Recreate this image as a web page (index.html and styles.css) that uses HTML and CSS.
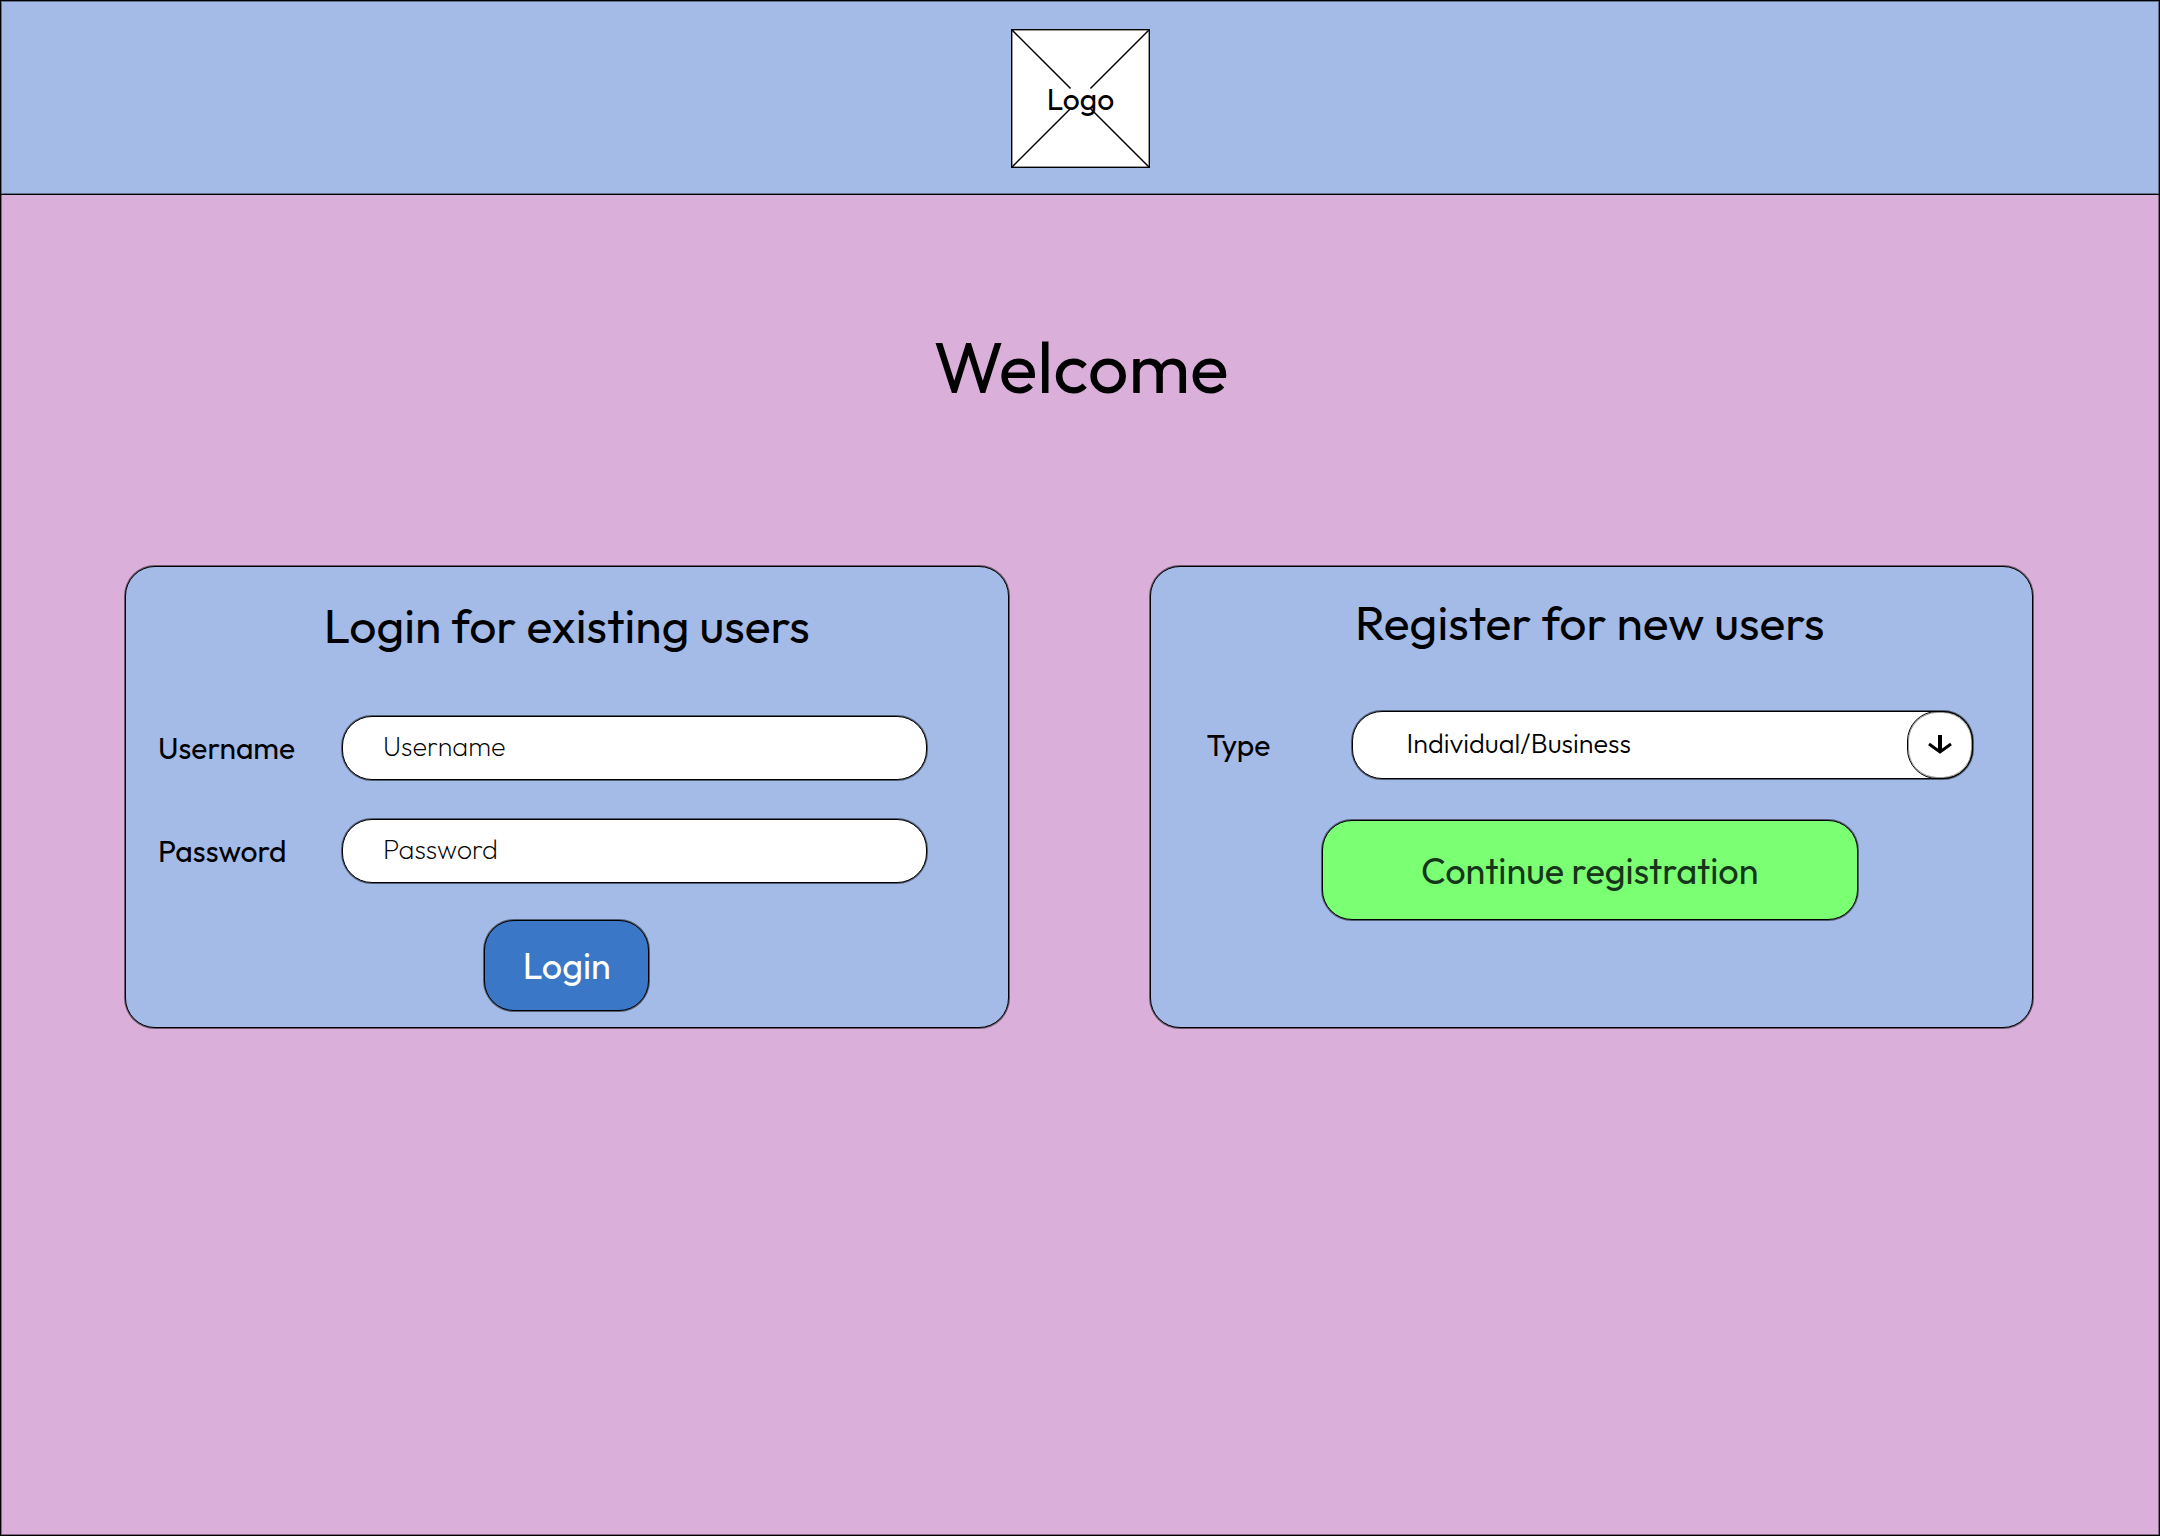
FILE: index.html
```html
<!DOCTYPE html>
<html lang="en">
<head>
<meta charset="utf-8">
<meta name="viewport" content="width=device-width, initial-scale=1">
<title>Welcome</title>
<link rel="stylesheet" href="styles.css">
</head>
<body>
<div class="page">
  <header class="header">
    <div class="logo">
      <svg class="logo-cross" viewBox="0 0 138 138" aria-hidden="true">
        <path d="M0 0L59 59M138 0L79 59M0 138L59 79M138 138L79 79"/>
      </svg>
      <span class="logo-text">Logo</span>
    </div>
  </header>
  <main class="main">
    <h1 class="title">Welcome</h1>
    <div class="cards">
      <section class="card card-login">
        <h2 class="card-title">Login for existing users</h2>
        <form class="form">
          <div class="row">
            <label class="label" for="username">Username</label>
            <input class="field" id="username" type="text" placeholder="Username">
          </div>
          <div class="row">
            <label class="label" for="password">Password</label>
            <input class="field" id="password" type="password" placeholder="Password">
          </div>
          <button class="button button-login" type="button">Login</button>
        </form>
      </section>
      <section class="card card-register">
        <h2 class="card-title">Register for new users</h2>
        <form class="form">
          <div class="row">
            <label class="label" for="type">Type</label>
            <div class="select-wrap">
              <select class="field select" id="type">
                <option>Individual/Business</option>
              </select>
              <span class="knob" aria-hidden="true">
                <svg class="arrow" viewBox="0 0 24 20">
                  <path class="shaft" d="M12 0V17"/>
                  <path class="head" d="M1 9L12 17L23 9"/>
                </svg>
              </span>
            </div>
          </div>
          <button class="button button-register" type="button">Continue registration</button>
        </form>
      </section>
    </div>
  </main>
</div>
</body>
</html>
```
FILE: styles.css
```css
:root {
  --blue: #a4bbe8;
  --pink: #dab0da;
  --edge: 0 0 0 1px rgba(0, 0, 0, 0.5);
}

* {
  box-sizing: border-box;
}

body {
  margin: 0;
  font-family: "Outfit", "Lato", sans-serif;
  color: #000;
}

.page {
  min-height: 100vh;
  border: 1px solid #000;
  background: var(--pink);
  box-shadow: inset 0 0 0 1px rgba(0, 0, 0, 0.4);
}

.header {
  display: flex;
  justify-content: center;
  padding: 28px 0 26px 1px;
  background: var(--blue);
  border-bottom: 1px solid #000;
  box-shadow: inset 0 0 0 1px rgba(0, 0, 0, 0.4);
}

.logo {
  display: grid;
  place-items: center;
  width: 139px;
  height: 139px;
  background: #fff;
  border: 1px solid #000;
  box-shadow: inset 0 0 0 1px rgba(0, 0, 0, 0.4);
}

.logo-cross,
.logo-text {
  grid-area: 1 / 1;
}

.logo-cross {
  width: 137px;
  height: 137px;
  fill: none;
  stroke: #000;
  stroke-width: 1.5;
}

.logo-text {
  font-size: 30px;
  line-height: 36px;
}

.title {
  margin: 0;
  padding: 127px 0 154px 2px;
  font-size: 72px;
  line-height: 90px;
  font-weight: 400;
  text-align: center;
}

.cards {
  display: grid;
  grid-template-columns: 1fr 1fr;
  gap: 141px;
  padding: 0 126px 48px 124px;
}

.card {
  min-height: 462px;
  background: var(--blue);
  border: 1px solid #000;
  border-radius: 30px;
  box-shadow: var(--edge);
}

.card-login {
  padding: 28px 81px 16px 32px;
}

.card-register {
  padding: 25px 59px 16px 56px;
}

.card-title {
  margin: 0;
  font-size: 48px;
  line-height: 60px;
  font-weight: 400;
  text-align: center;
}

.card-login .card-title {
  margin-right: -49px;
}

.form {
  display: flex;
  flex-direction: column;
}

.row {
  display: flex;
  align-items: center;
}

.card-login .row {
  margin-top: 39px;
}

.card-login .row:first-child {
  margin-top: 61px;
}

.card-register .row {
  margin-top: 59px;
}

.label {
  flex: none;
  font-size: 30px;
  line-height: 38px;
}

.card-login .label {
  width: 184px;
}

.card-register .label {
  width: 145px;
}

.field {
  flex: 1;
  min-width: 0;
  height: 64px;
  padding: 0 40px 4px;
  font: 200 27px/34px "Outfit", "Lato", sans-serif;
  color: #000;
  background: #fff;
  border: 1px solid #000;
  border-radius: 30px;
  box-shadow: var(--edge);
}

.field::placeholder {
  color: #000;
  opacity: 1;
}

.select-wrap {
  position: relative;
  display: flex;
  flex: 1;
}

.select {
  height: 68px;
  padding: 0 80px 4px 54px;
  font-weight: 300;
  appearance: none;
}

.knob {
  position: absolute;
  top: 0;
  right: 0;
  display: grid;
  place-items: center;
  width: 66px;
  height: 68px;
  border: 1px solid #000;
  border-radius: 30px;
  box-shadow: inset 0 0 0 1px rgba(0, 0, 0, 0.4);
  pointer-events: none;
}

.arrow {
  width: 24px;
  height: 20px;
  fill: none;
  stroke: #000;
}

.shaft {
  stroke-width: 4;
}

.head {
  stroke-width: 3;
}

.button {
  align-self: center;
  padding: 0;
  font: 400 36px/45px "Outfit", "Lato", sans-serif;
  border: 1px solid #000;
  border-radius: 30px;
  box-shadow: var(--edge);
}

.button-login {
  width: 165px;
  height: 91px;
  margin: 37px 0 0 49px;
  color: #fff;
  background: #3a77c7;
}

.button-register {
  width: 536px;
  height: 100px;
  margin-top: 41px;
  color: #17351a;
  background: #7bff73;
}
```
